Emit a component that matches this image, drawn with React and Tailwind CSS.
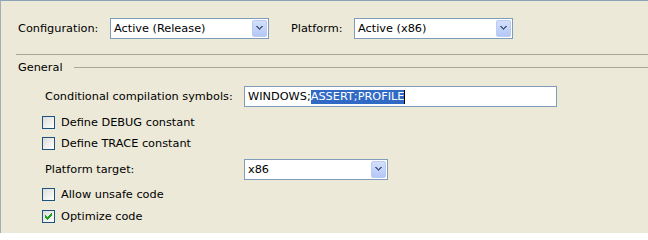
import React from "react";

const font = { fontFamily: '"DejaVu Sans", Verdana, sans-serif' };

function Chevron() {
  return (
    <div className="ml-auto mr-px flex h-[17px] w-[15px] items-center justify-center rounded-[2px] border border-[#BACBF4] bg-gradient-to-b from-[#D3DFFB] to-[#B4C8F6]">
      <svg width="7" height="5" viewBox="0 0 7 5" shapeRendering="crispEdges">
        <path d="M0 0h2v1h1v1h1V1h1V0h2v1H6v1H5v1H4v1H3V3H2V2H1V1H0z" fill="#4D6185" />
      </svg>
    </div>
  );
}

function Select({ value, width }) {
  return (
    <div className={`flex h-[21px] items-center border border-[#7F9DB9] bg-white pl-[3px] ${width}`}>
      <span className="text-[11.3px] leading-none text-black">{value}</span>
      <Chevron />
    </div>
  );
}

function Checkbox({ checked, label, className }) {
  return (
    <div className={`flex h-[13px] items-center pl-[41px] ${className}`}>
      <div className="flex h-[13px] w-[13px] items-center justify-center border border-[#1C5180] bg-gradient-to-br from-[#DCDCD7] to-white">
        {checked && (
          <svg width="7" height="7" viewBox="0 0 7 7" shapeRendering="crispEdges">
            <path d="M6 0h1v3H6v1H5v1H4v1H3v1H2V6H1V5H0V2h1v1h1v1h1V3h1V2h1V1h1z" fill="#21A121" />
          </svg>
        )}
      </div>
      <span className="ml-[6px] text-[11.3px] leading-none text-black">{label}</span>
    </div>
  );
}

export default function App() {
  return (
    <div
      className="h-[233px] w-[648px] overflow-hidden border-l border-t border-l-[#A5ADB5] border-t-[#8DA2B5] bg-[#ECE9D8]"
      style={font}
    >
      <div className="flex h-[21px] items-center pl-[17px] mt-[17px]">
        <span className="w-[92px] text-[11.3px] leading-none text-black">Configuration:</span>
        <Select value="Active (Release)" width="w-[159px]" />
        <span className="ml-[22px] w-[63px] text-[11.3px] leading-none text-black">Platform:</span>
        <Select value="Active (x86)" width="w-[159px]" />
      </div>

      <div className="ml-[15px] mt-[15px] h-px bg-[#A9A797]" />

      <div className="mt-[5px] flex h-[15px] items-center pl-[17px]">
        <span className="text-[11.3px] leading-none text-black">General</span>
        <div className="ml-[11px] h-px flex-1 bg-[#A9A797]" />
      </div>

      <div className="mt-[11px] flex h-[21px] items-center pl-[44px]">
        <span className="w-[199px] text-[11.3px] leading-none text-black">Conditional compilation symbols:</span>
        <div className="flex h-[21px] w-[313px] items-center border border-[#7F9DB9] bg-white pl-[3px]">
          <span className="text-[11.3px] leading-none text-black">WINDOWS;</span>
          <span className="flex h-[14px] items-center bg-[#316AC5] text-[11.3px] leading-none text-white">ASSERT;PROFILE</span>
          <span className="h-[14px] w-px bg-black" />
        </div>
      </div>

      <Checkbox label="Define DEBUG constant" className="mt-[9px]" />
      <Checkbox label="Define TRACE constant" className="mt-[8px]" />

      <div className="mt-[9px] flex h-[21px] items-center pl-[44px]">
        <span className="w-[199px] text-[11.3px] leading-none text-black">Platform target:</span>
        <Select value="x86" width="w-[144px]" />
      </div>

      <Checkbox label="Allow unsafe code" className="mt-[8px]" />
      <Checkbox label="Optimize code" checked className="mt-[9px]" />
    </div>
  );
}
